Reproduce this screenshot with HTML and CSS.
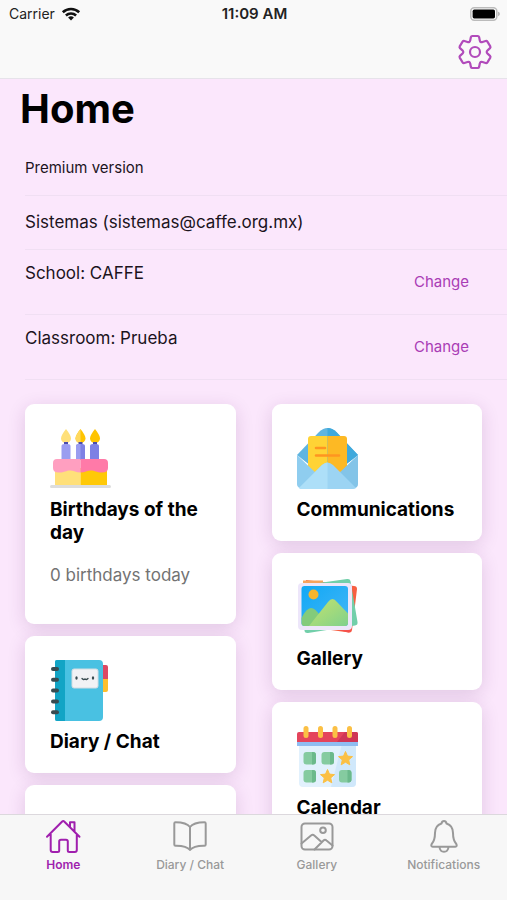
FILE: index.html
```html
<!DOCTYPE html>
<html lang="en">
<head>
  <meta charset="UTF-8">
  <meta name="viewport" content="width=device-width, initial-scale=1.0">
  <title>Home</title>
  <link rel="stylesheet" href="styles.css">
</head>
<body>
  <header class="header">
    <div class="status">
      <div class="carrier">
        <span>Carrier</span>
        <svg width="20" height="14" viewBox="0 0 20 14" fill="none" stroke="#111" stroke-width="2.6">
          <path d="M1.8 5.2a12 12 0 0 1 16.4 0"/>
          <path d="M4.9 8.5a7.5 7.5 0 0 1 10.2 0"/>
          <path d="M10 13.6l-2.9-3a4.3 4.3 0 0 1 5.8 0z" fill="#111" stroke="none"/>
        </svg>
      </div>
      <strong class="clock">11:09 AM</strong>
      <div class="battery">
        <svg width="30" height="14" viewBox="0 0 30 14">
          <rect x="0.8" y="0.8" width="26" height="12.4" rx="3.4" fill="#fff" stroke="#bbb" stroke-width="1.5"/>
          <rect x="2.6" y="2.6" width="22.4" height="8.8" rx="1.6" fill="#000"/>
          <path d="M28.2 4.8c2 .6 2 3.8 0 4.4z" fill="#aaa"/>
        </svg>
      </div>
    </div>
    <div class="toolbar">
      <button class="settings" aria-label="Settings">
        <svg width="36" height="36" viewBox="0 0 36 36" fill="none" stroke="#b14bbb" stroke-width="2.2" stroke-linejoin="round">
          <path d="M13.2 6.4L13.9 3.1Q14.2 2 15.3 2H20.7Q21.8 2 22.1 3.1L22.8 6.4Q23.3 8.7 25.5 8L28.6 7Q29.8 6.7 30.4 7.6L33.3 12.4Q33.8 13.4 33 14.2L30.6 16.3Q28.8 18 30.6 19.7L33 21.8Q33.8 22.6 33.3 23.6L30.4 28.4Q29.8 29.3 28.6 29L25.5 28Q23.3 27.3 22.8 29.6L22.1 32.9Q21.8 34 20.7 34H15.3Q14.2 34 13.9 32.9L13.2 29.6Q12.7 27.3 10.5 28L7.4 29Q6.2 29.3 5.6 28.4L2.7 23.6Q2.2 22.6 3 21.8L5.4 19.7Q7.2 18 5.4 16.3L3 14.2Q2.2 13.4 2.7 12.4L5.6 7.6Q6.2 6.7 7.4 7L10.5 8Q12.7 8.7 13.2 6.4Z"/>
          <circle cx="18" cy="18" r="5"/>
        </svg>
      </button>
    </div>
  </header>

  <main class="content">
    <h1>Home</h1>

    <ul class="list">
      <li class="small"><span>Premium version</span></li>
      <li><span>Sistemas (sistemas@caffe.org.mx)</span></li>
      <li class="tall"><span>School: CAFFE</span><button>Change</button></li>
      <li class="tall"><span>Classroom: Prueba</span><button>Change</button></li>
    </ul>

    <div class="cards">
      <div class="column">
        <a class="card" href="#birthdays">
          <svg width="61" height="61" viewBox="0 0 61 61">
            <path d="M16 1c-3 4-5 7-5 9.500a4.800 4.500 0 0 0 10 0C21 8 19 5 16 1z" fill="#ffe07a"/>
            <path d="M30.500 1c-3 4-5 7-5 9.500a4.800 4.500 0 0 0 10 0C35.500 8 33.500 5 30.500 1z" fill="#ffc400"/>
            <path d="M30.500 1c-3 4-5 7-5 9.500 0 3 2.200 4.500 5 4.500z" fill="#ffd95e"/>
            <path d="M45 1c-3 4-5 7-5 9.500a4.800 4.500 0 0 0 10 0C50 8 48 5 45 1z" fill="#ffc400"/>
            <path d="M14 14h4v4h-4zM28.500 14h4v4h-4zM43 14h4v4h-4z" fill="#4b4cad"/>
            <path d="M11.500 18q0-2 3-2h3q3 0 3 2v14h-9z" fill="#9a9df0"/>
            <path d="M26 18q0-2 3-2h3q3 0 3 2v14h-9z" fill="#7d80e4"/>
            <path d="M26 18q0-2 3-2h1.500v16H26z" fill="#9a9df0"/>
            <path d="M40 18q0-2 3-2h3q3 0 3 2v14h-9z" fill="#7d80e4"/>
            <path d="M5 40h25.500v17H5z" fill="#ffe07a"/>
            <path d="M30.500 40H57v17H30.500z" fill="#ffc907"/>
            <path d="M30.500 31H7q-4 0-4 4v5q0 4.500 6 4.500c6 0 7-2 11-2s6 2 10.500 2z" fill="#ff9fc0"/>
            <path d="M30.500 31H54q4 0 4 4v5q0 4.500-6 4.500c-6 0-7-2-11-2s-6 2-10.500 2z" fill="#ff7aa8"/>
            <rect y="57" width="61" height="3" rx="1.500" fill="#ddd"/>
          </svg>
          <h2>Birthdays of the day</h2>
          <p>0 birthdays today</p>
        </a>
        <a class="card" href="#diary">
          <svg width="61" height="61" viewBox="0 0 61 61">
            <path d="M50 5h6q2 0 2 2v12h-8z" fill="#dc4963"/>
            <path d="M50 19h8v11q0 2-2 2h-6z" fill="#fdbf2d"/>
            <path d="M7 0h42q4 0 4 4v53q0 4-4 4H7q-2 0-2-2V2q0-2 2-2z" fill="#49c1e2"/>
            <path d="M7 0h8v61H7q-2 0-2-2V2q0-2 2-2z" fill="#12a4c5"/>
            <rect x="22" y="9" width="26" height="19" rx="2" fill="#f1f2f5" stroke="#d3dce2"/>
            <g fill="#394b50">
              <rect x="1" y="7" width="8" height="4" rx="2"/>
              <rect x="1" y="17.800" width="8" height="4" rx="2"/>
              <rect x="1" y="28.600" width="8" height="4" rx="2"/>
              <rect x="1" y="39.400" width="8" height="4" rx="2"/>
              <rect x="1" y="50.200" width="8" height="4" rx="2"/>
              <ellipse cx="26.500" cy="18" rx="1.200" ry="1.700"/>
              <ellipse cx="43" cy="18" rx="1.200" ry="1.700"/>
            </g>
            <path d="M32 18.500q1.500 1.800 3 .4q1.500 1.400 3-.4" fill="none" stroke="#394b50" stroke-width="1.300" stroke-linecap="round"/>
          </svg>
          <h2>Diary / Chat</h2>
        </a>
        <div class="card"></div>
      </div>

      <div class="column">
        <a class="card" href="#communications">
          <svg width="61" height="61" viewBox="0 0 61 61">
            <path d="M0 27L22 4q8.500-8 17 0l22 23-30.500 24z" fill="#5fb5e0"/>
            <path d="M30.500 0q5 0 9 4L61 27 30.500 51z" fill="#3fa9dc"/>
            <path d="M14 8h16.500v40L11 42V11q0-3 3-3z" fill="#ffd335"/>
            <path d="M30.500 8H47q3 0 3 3v31l-19.500 6z" fill="#fdb924"/>
            <path d="M19 20h9M19 27.500h23" fill="none" stroke="#ff9520" stroke-width="2.600" stroke-linecap="round"/>
            <path d="M0 27l21 20L3 60q-3-1-3-4z" fill="#8fcdef"/>
            <path d="M61 27L40 47l18 13q3-1 3-4z" fill="#83c4e8"/>
            <path d="M2 60l23-23q5.500-5 11 0l23 23q-1 1-3 1H5q-2 0-3-1z" fill="#9cd4f3"/>
            <path d="M2 60l23-23q3-2.600 5.500-2.600V61H5q-2 0-3-1z" fill="#addff8"/>
          </svg>
          <h2>Communications</h2>
        </a>
        <a class="card" href="#gallery">
          <svg width="61" height="61" viewBox="0 0 61 61">
            <defs>
              <linearGradient id="sky" x1="0" y1="0" x2="1" y2="1">
                <stop offset="0" stop-color="#10a8f5"/>
                <stop offset="1" stop-color="#45b6f7"/>
              </linearGradient>
              <linearGradient id="hill" x1="0" y1="0" x2="1" y2="1">
                <stop offset="0" stop-color="#c5e36c"/>
                <stop offset="1" stop-color="#80d18c"/>
              </linearGradient>
            </defs>
            <path d="M9 3L57 9q3 0 3 3l-5 41q-.500 3-3 2.500L5 49z" fill="#f75f42"/>
            <path d="M6 3.500h20v6H6z" fill="#f7a35c"/>
            <path d="M8 8L50 2q3-.500 3.500 2l7 41q.500 3-2.500 3.500L11 56q-3 .500-3.500-2z" fill="#72cfaa"/>
            <path d="M30 50h25l-.600 3q-.500 3-4 2.300z" fill="#f5504d"/>
            <rect x="1" y="6" width="54" height="47" rx="4" fill="#ede6fa"/>
            <rect x="4.500" y="9" width="46.500" height="40" rx="3" fill="url(#sky)"/>
            <circle cx="16.500" cy="17.500" r="5" fill="#f8b52e"/>
            <path d="M4.500 41q5-10 9.500-10t9 8l-9 10H7.500q-3 0-3-3z" fill="#83cb7b"/>
            <path d="M12 49L31 25q4.500-6 9 0l11 11.500V46q0 3-3 3z" fill="url(#hill)"/>
          </svg>
          <h2>Gallery</h2>
        </a>
        <a class="card" href="#calendar">
          <svg width="61" height="61" viewBox="0 0 61 61">
            <path d="M2 18h57v39q0 4-4 4H6q-4 0-4-4z" fill="#e2f1fd"/>
            <path d="M45 18h14v39q0 4-4 4H34z" fill="#d0e8fb"/>
            <path d="M0 15h61v5H0z" fill="#8fbdf2"/>
            <path d="M2 6h57q2 0 2 2v8H0V8q0-2 2-2z" fill="#e4445c"/>
            <path d="M48 6h11q2 0 2 2v8H40z" fill="#cf3656"/>
            <g fill="#fbc044">
              <rect x="6.500" y="0" width="5" height="12" rx="2.500"/>
              <rect x="21" y="0" width="5" height="12" rx="2.500"/>
              <rect x="35.500" y="0" width="5" height="12" rx="2.500"/>
              <rect x="50" y="0" width="5" height="12" rx="2.500"/>
              <path id="star" d="M48.500 25.500l2 4.600 5 .5-3.800 3.300 1.100 4.900-4.300-2.600-4.300 2.600 1.100-4.900-3.800-3.300 5-.5z" stroke="#fbc044" stroke-linejoin="round"/>
              <use href="#star" x="-18" y="18"/>
            </g>
            <g fill="#85cba0">
              <rect x="6.500" y="26" width="12.500" height="12.500" rx="3"/>
              <rect x="24.500" y="26" width="12.500" height="12.500" rx="3"/>
              <rect x="6.500" y="44" width="12.500" height="12.500" rx="3"/>
              <rect x="42" y="44" width="12.500" height="12.500" rx="3"/>
            </g>
            <path d="M15 26h1q3 0 3 3v6.500q0 3-3 3h-1zM33 26h1q3 0 3 3v6.500q0 3-3 3h-1zM15 44h1q3 0 3 3v6.500q0 3-3 3h-1zM50.500 44h1q3 0 3 3v6.500q0 3-3 3h-1z" fill="#6bb98b"/>
          </svg>
          <h2>Calendar</h2>
        </a>
      </div>
    </div>
  </main>

  <nav class="tabs">
    <a class="tab active" href="#home">
      <svg width="36" height="36" viewBox="0 0 36 36">
        <path d="M2 18.700L17.200 3.500q1-1 2 0L34.500 18.700M5.700 16v16q0 2 2 2h5q1.500 0 1.500-1.500V23.500q0-1.800 1.800-1.800h5q1.800 0 1.800 1.800v9q0 1.500 1.500 1.500h5.500q2 0 2-2V16M25 9V4.200h4.500v9"/>
      </svg>
      <span>Home</span>
    </a>
    <a class="tab" href="#diary">
      <svg width="36" height="36" viewBox="0 0 36 36">
        <path d="M18 9q-3.500-4.700-14.500-4.800-1.200 0-1.200 1.300v21q0 1.200 1.200 1.200Q14.500 27.500 18 32q3.500-4.500 14.500-4.300 1.200 0 1.200-1.200v-21q0-1.300-1.200-1.300Q21.500 4.300 18 9zV32"/>
      </svg>
      <span>Diary / Chat</span>
    </a>
    <a class="tab" href="#gallery">
      <svg width="36" height="36" viewBox="0 0 36 36">
        <rect x="2.500" y="5.500" width="31" height="26" rx="3.500"/>
        <circle cx="24" cy="12.300" r="2.800"/>
        <path d="M2.500 25.500l9.500-8q1.700-1.400 3.300 0l7.200 6.500M15.500 31.500l9-9q1.500-1.400 3 0l6 5"/>
      </svg>
      <span>Gallery</span>
    </a>
    <a class="tab" href="#notifications">
      <svg width="36" height="36" viewBox="0 0 36 36">
        <path d="M18 3q-2 0-2.500 2.500C11 7 9 10.500 9 15c0 6-1.500 9-3.300 11q-1.200 2.700 1 2.700h22.600q2.200 0 1-2.700C28.500 24 27 21 27 15c0-4.500-2-8-6.500-9.500Q20 3 18 3zM13.500 29q.500 4.800 4.500 4.800t4.500-4.800"/>
      </svg>
      <span>Notifications</span>
    </a>
  </nav>
</body>
</html>
```

FILE: styles.css
```css
* { box-sizing: border-box; }
body {
  margin: 0;
  height: 100vh;
  display: flex;
  flex-direction: column;
  font-family: Inter, "Liberation Sans", sans-serif;
  background-color: #fbe7fc;
  color: #000;
}
h1, h2, p, ul { margin: 0; padding: 0; }
a { color: inherit; text-decoration: none; }
button {
  padding: 0;
  border: none;
  background: none;
  font: inherit;
  color: #a93cb5;
  cursor: pointer;
}
svg { display: block; }

/* top bar */
.header {
  flex: none;
  background-color: #f9f9f9;
  border-bottom: 1px solid #e6e3ea;
}
.status {
  display: grid;
  grid-template-columns: 1fr auto 1fr;
  align-items: center;
  height: 27px;
  padding: 0 7px 0 9px;
  font-size: 14px;
  color: #222;
}
.carrier {
  display: flex;
  align-items: center;
  gap: 6px;
}
.clock {
  font-size: 15px;
  font-weight: 600;
}
.battery { justify-self: end; }
.toolbar {
  display: flex;
  justify-content: flex-end;
  padding: 7px 14px 8px;
}

/* page */
.content {
  flex: 1;
  min-height: 0;
  overflow: hidden;
}
h1 {
  padding: 0 20px;
  font-size: 40px;
  line-height: 60px;
  font-weight: 700;
}
.list {
  list-style: none;
  padding-left: 25px;
}
.list li {
  display: flex;
  justify-content: space-between;
  height: 54px;
  padding-right: 38px;
  border-bottom: 1px solid #f0dff3;
  font-size: 17px;
  line-height: 52px;
  color: #1c141d;
}
.list .small {
  height: 57px;
  font-size: 15px;
  line-height: 58px;
}
.list .tall {
  height: 65px;
  line-height: 46px;
}
.list button {
  font-size: 15px;
  line-height: 62px;
}

.cards {
  display: grid;
  grid-template-columns: 1fr 1fr;
  gap: 36px;
  padding: 24px 25px;
}
.column {
  display: flex;
  flex-direction: column;
  gap: 12px;
}
.card {
  display: block;
  min-height: 137px;
  padding: 24px 25px 20px;
  border-radius: 9px;
  background-color: #fff;
  box-shadow: 0 4px 18px rgba(90, 30, 100, 0.16);
}
.card h2 {
  margin-top: 9px;
  font-size: 19px;
  line-height: 23px;
  font-weight: 700;
}
.card p {
  margin: 20px 0 17px;
  font-size: 17px;
  line-height: 23px;
  color: #737373;
}

/* bottom tabs */
.tabs {
  position: relative;
  flex: none;
  display: grid;
  grid-template-columns: repeat(4, 1fr);
  height: 86px;
  padding-top: 3px;
  border-top: 1px solid #dcd8dd;
  background-color: #f7f7f7;
}
.tab {
  display: flex;
  flex-direction: column;
  align-items: center;
  font-size: 12px;
  line-height: 22px;
  font-weight: 500;
  color: #999;
}
.tab svg {
  fill: none;
  stroke: currentColor;
  stroke-width: 2;
  stroke-linecap: round;
  stroke-linejoin: round;
}
.active {
  font-weight: 600;
  color: #a01fae;
}
```
